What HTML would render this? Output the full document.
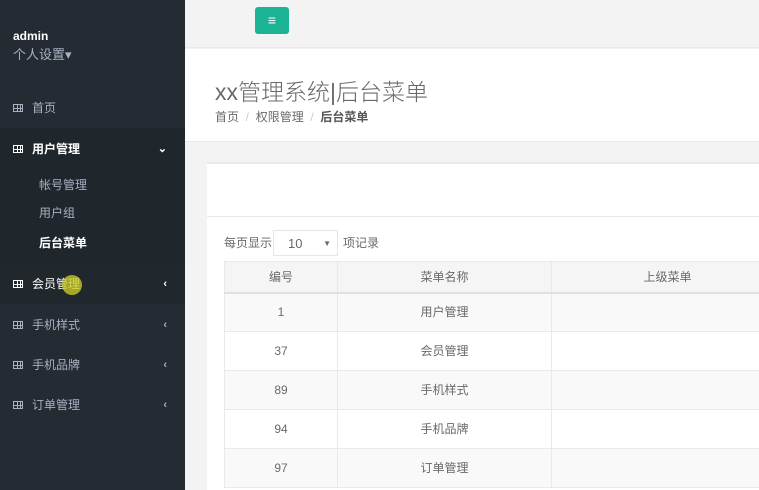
<!DOCTYPE html>
<html><head><meta charset="utf-8"><style>
*{margin:0;padding:0;box-sizing:border-box}
html,body{width:759px;height:490px;overflow:hidden}
body{background:#f3f3f4;font-family:"Liberation Sans","Noto Sans CJK SC",sans-serif;font-size:12px;color:#676a6c;position:relative}
.side{position:absolute;left:0;top:0;width:185px;height:490px;background:#242b32}
.side .t{position:absolute;left:13px;color:#fff;font-weight:bold;font-size:12px;top:29px}
.side .s{position:absolute;left:13px;top:44px;color:#a7b1c2;font-size:13px}
.mi{position:absolute;left:0;width:185px;height:40px;line-height:40px;padding-left:13px;color:#a7b1c2;font-size:12px}
.mi i{display:inline-block;width:10px;height:8px;border:1px solid currentColor;margin-right:9px;vertical-align:-0px;background:linear-gradient(90deg,transparent 3px,currentColor 3px,currentColor 4px,transparent 4px,transparent 6px,currentColor 6px,currentColor 7px,transparent 7px),linear-gradient(transparent 3px,currentColor 3px,currentColor 4px,transparent 4px)}
.mi b{position:absolute;right:18px;top:0;font-weight:bold;font-size:11px}
.sub{position:absolute;left:39px;color:#a7b1c2;font-size:12px}
.top{position:absolute;left:185px;top:0;right:0;height:48px;background:#f3f3f4;border-bottom:1px solid #e7eaec}
.btn{position:absolute;left:255px;top:7px;width:34px;height:27px;background:#1ab394;border-radius:3px;color:#fff;text-align:center;line-height:27px;font-size:14px}
.hd{position:absolute;left:185px;top:49px;right:0;height:93px;background:#fff;border-bottom:1px solid #e7eaec}
.hd h2{position:absolute;left:30px;top:24px;font-weight:300;font-size:23px;color:#676a6c}
.hd .bc{position:absolute;left:30px;top:59px;font-size:12px}
.card{position:absolute;left:207px;top:162px;right:0;height:328px;background:#fff;border-top:2px solid #e7eaec}
.card .line{position:absolute;left:0;right:0;top:52px;border-top:1px solid #e7eaec}
table{position:absolute;left:224px;top:261px;border-collapse:collapse;width:560px;font-size:12px}
td,th{border:1px solid #e7eaec;text-align:center;height:39px;font-weight:normal;vertical-align:middle;line-height:14px}
th{height:31px;background:#f5f5f6;border-bottom:2px solid #e0e0e0}
tr:nth-child(even) td{background:#f9f9f9}
</style></head><body>
<div class="side">
<div class="t">admin</div><div class="s">个人设置▾</div>
<div class="mi" style="top:88px"><i></i>首页</div>
<div style="position:absolute;top:128px;left:0;width:185px;height:140px;background:#1f262c"></div>
<div class="mi" style="top:129px;color:#fff;font-weight:bold"><i></i>用户管理<b>⌄</b></div>
<div class="sub" style="top:176px">帐号管理</div>
<div class="sub" style="top:204px">用户组</div>
<div class="sub" style="top:234px;color:#fff;font-weight:bold">后台菜单</div>
<div class="mi" style="top:264px;color:#fff;background:#20272d"><i></i>会员管理<b>‹</b></div>
<div style="position:absolute;left:62px;top:275px;width:20px;height:20px;border-radius:50%;background:rgba(200,200,40,.8)"></div>
<div class="mi" style="top:305px"><i></i>手机样式<b>‹</b></div>
<div class="mi" style="top:345px"><i></i>手机品牌<b>‹</b></div>
<div class="mi" style="top:385px"><i></i>订单管理<b>‹</b></div>
</div>
<div class="top"></div>
<div class="btn">≡</div>
<div class="hd"><h2>xx管理系统|后台菜单</h2><div class="bc">首页 <span style="color:#ccc">&nbsp;/&nbsp;</span> 权限管理 <span style="color:#ccc">&nbsp;/&nbsp;</span> <b style="color:#555">后台菜单</b></div></div>
<div class="card"><div class="line"></div></div>
<div style="position:absolute;left:224px;top:234px;font-size:12px">每页显示</div>
<div style="position:absolute;left:273px;top:230px;width:65px;height:26px;border:1px solid #e5e6e7;font-size:13px;line-height:26px;padding-left:14px">10<span style="position:absolute;right:6px;font-size:8px">▼</span></div>
<div style="position:absolute;left:343px;top:234px">项记录</div>
<table><tr><th style="width:113px">编号</th><th style="width:214px">菜单名称</th><th>上级菜单</th></tr>
<tr><td>1</td><td>用户管理</td><td></td></tr>
<tr><td>37</td><td>会员管理</td><td></td></tr>
<tr><td>89</td><td>手机样式</td><td></td></tr>
<tr><td>94</td><td>手机品牌</td><td></td></tr>
<tr><td>97</td><td>订单管理</td><td></td></tr>
</table>
</body></html>
